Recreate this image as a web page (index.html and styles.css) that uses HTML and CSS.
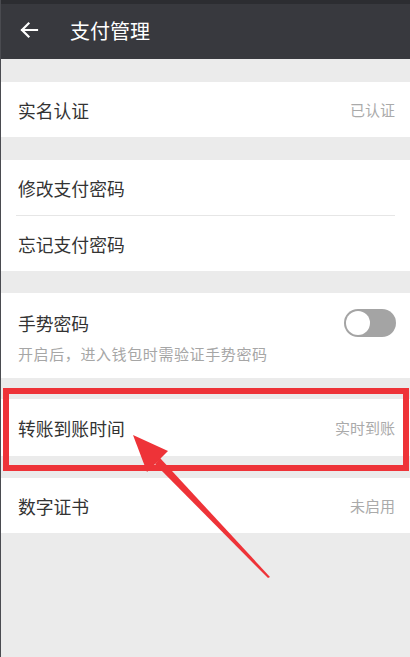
FILE: index.html
```html
<!DOCTYPE html>
<html lang="zh-CN">
<head>
    <meta charset="UTF-8">
    <meta name="viewport" content="width=device-width, initial-scale=1.0">
    <title>支付管理</title>
    <link rel="stylesheet" href="styles.css">
</head>
<body>
    <div class="screen">
        <div class="status-strip"></div>
        <div class="top-bar">
            <svg class="back-icon" width="20" height="20" viewBox="0 0 20 20">
                <path d="M18 10H3M9.5 3.5L3 10l6.5 6.5" fill="none" stroke="#fff" stroke-width="2.2" stroke-linecap="square"/>
            </svg>
            <span class="bar-title">支付管理</span>
        </div>

        <div class="group g1">
            <div class="row">
                <span class="label">实名认证</span>
                <span class="value">已认证</span>
            </div>
        </div>

        <div class="group g2">
            <div class="row">
                <span class="label">修改支付密码</span>
            </div>
            <div class="divider"></div>
            <div class="row">
                <span class="label">忘记支付密码</span>
            </div>
        </div>

        <div class="group g3">
            <div class="gesture-row">
                <div class="gesture-text">
                    <span class="label">手势密码</span>
                    <span class="hint">开启后，进入钱包时需验证手势密码</span>
                </div>
                <div class="toggle"><div class="knob"></div></div>
            </div>
        </div>

        <div class="group g4">
            <div class="row tall">
                <span class="label">转账到账时间</span>
                <span class="value">实时到账</span>
            </div>
        </div>

        <div class="group g5">
            <div class="row">
                <span class="label">数字证书</span>
                <span class="value">未启用</span>
            </div>
        </div>

        <!-- annotation overlay -->
        <div class="mark-box"></div>
        <svg class="mark-arrow" width="410" height="657" viewBox="0 0 410 657">
            <polygon points="133,435 168,451 147,472" fill="#ee3338"/>
            <polygon points="160,458 155,464 268,578 270,577" fill="#ee3338"/>
        </svg>
    </div>
</body>
</html>
```

FILE: styles.css
```css
body {
    margin: 0;
    font-family: "Noto Sans CJK SC", "Noto Sans", sans-serif;
    background: #ebebeb;
}
.screen {
    position: relative;
    width: 410px;
    height: 657px;
    background: #ebebeb;
    overflow: hidden;
    display: flex;
    flex-direction: column;
    border-left: 1px solid #4a4b50;
    box-sizing: border-box;
}
.status-strip {
    height: 4px;
    background: #2c2d31;
}
.top-bar {
    height: 55px;
    background: #38393e;
    display: flex;
    align-items: center;
    padding-left: 18px;
}
.back-icon {
    margin-top: -3px;
}
.bar-title {
    color: #fff;
    font-size: 20px;
    margin-left: 31px;
    margin-top: -3px;
}
.group {
    background: #fff;
}
.g1 { margin-top: 23px; }
.g2 { margin-top: 23px; }
.g3 { margin-top: 22px; }
.g4 { margin-top: 21px; }
.g5 { margin-top: 22px; }
.row {
    height: 55px;
    display: flex;
    align-items: center;
    justify-content: space-between;
    padding: 0 15px 0 17px;
}
.row.tall {
    height: 57px;
}
.label {
    font-size: 17.8px;
    color: #333;
}
.value {
    font-size: 15px;
    color: #aaa;
}
.divider {
    height: 1px;
    background: #e6e6e6;
    margin: 0 15px 0 15px;
}
.gesture-row {
    height: 85px;
    display: flex;
    align-items: center;
    justify-content: space-between;
    padding: 0 14px 0 17px;
}
.gesture-text {
    display: flex;
    flex-direction: column;
    gap: 7px;
    margin-top: 3px;
}
.hint {
    font-size: 15px;
    color: #a6a6a6;
    letter-spacing: 0.6px;
}
.toggle {
    width: 52px;
    height: 28px;
    border-radius: 14px;
    background: #a4a4a4;
    position: relative;
    margin-top: -26px;
}
.knob {
    position: absolute;
    left: 2px;
    top: 2px;
    width: 24px;
    height: 24px;
    border-radius: 50%;
    background: #fff;
}
.mark-box {
    position: absolute;
    left: 2px;
    top: 388px;
    width: 394px;
    height: 71px;
    border: 6px solid #ee3338;
}
.mark-arrow {
    position: absolute;
    left: -1px;
    top: 0;
}
```
